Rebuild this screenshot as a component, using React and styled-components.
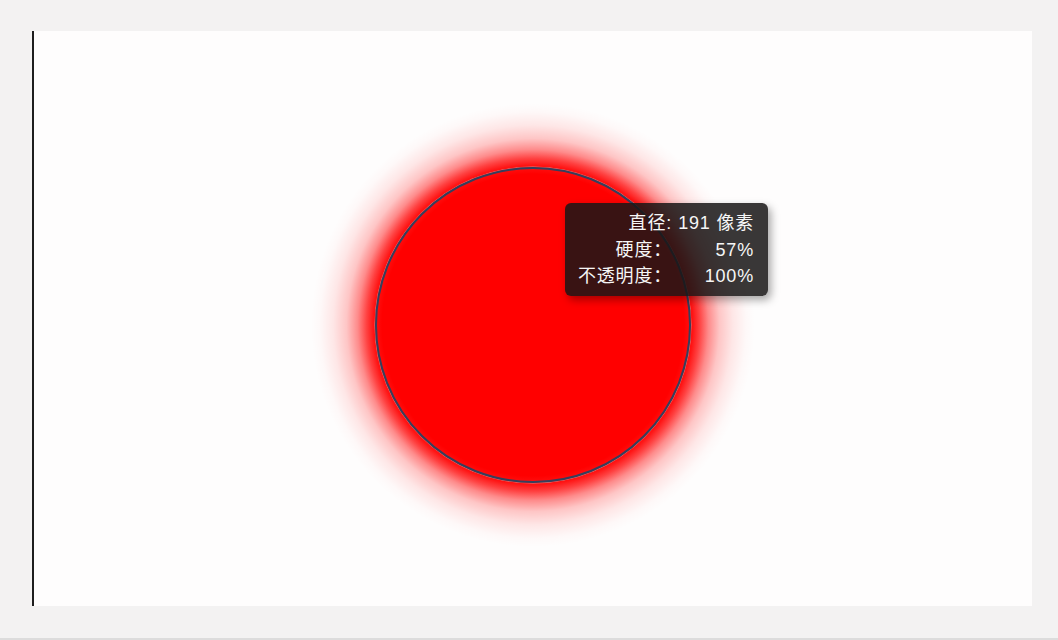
import styled, { createGlobalStyle } from 'styled-components';

const GlobalStyle = createGlobalStyle`
  html, body {
    margin: 0;
    padding: 0;
    background: #f3f2f2;
    font-family: "Noto Sans CJK SC", "Noto Sans", sans-serif;
  }
`;

const Page = styled.div`
  width: 1058px;
  height: 640px;
  box-sizing: border-box;
  padding: 31px 26px 32px 32px;
  border-bottom: 2px solid #dcdcdc;
  background: #f3f2f2;
  display: flex;
`;

const Canvas = styled.div`
  position: relative;
  flex: 1;
  background: #fefdfd;
  border-left: 2px solid #1e1e1e;
  overflow: hidden;
`;

const Brush = styled.div`
  position: absolute;
  left: ${p => p.$x - p.$glow}px;
  top: ${p => p.$y - p.$glow}px;
  width: ${p => p.$glow * 2}px;
  height: ${p => p.$glow * 2}px;
  border-radius: 50%;
  background: radial-gradient(
    circle closest-side,
    #ff0000 0%,
    #ff0000 68%,
    rgba(255, 0, 0, 0.92) 72%,
    rgba(255, 0, 0, 0.74) 75%,
    rgba(255, 0, 0, 0.45) 79%,
    rgba(255, 0, 0, 0.22) 84%,
    rgba(255, 0, 0, 0.09) 90%,
    rgba(255, 0, 0, 0.02) 96%,
    rgba(255, 0, 0, 0) 100%
  );
`;

const Outline = styled.div`
  position: absolute;
  left: ${p => p.$x - p.$r}px;
  top: ${p => p.$y - p.$r}px;
  width: ${p => p.$r * 2}px;
  height: ${p => p.$r * 2}px;
  box-sizing: border-box;
  border-radius: 50%;
  border: 2px solid #34405e;
  box-shadow: 0 0 0 0.5px rgba(190, 190, 190, 0.7);
`;

const Tooltip = styled.div`
  position: absolute;
  left: 531px;
  top: 172px;
  width: 203px;
  height: 93px;
  box-sizing: border-box;
  padding: 7px 14px 0 10px;
  border-radius: 6px;
  background: rgba(24, 22, 22, 0.86);
  box-shadow: 3px 4px 8px rgba(0, 0, 0, 0.35);
  color: #f6f6f6;
  font-family: "Liberation Sans", "Noto Sans CJK SC", sans-serif;
  font-size: 18px;
  line-height: 26.5px;
  letter-spacing: 0.8px;
  display: grid;
  grid-template-columns: 1fr auto;
  align-content: start;
`;

const Label = styled.span`
  text-align: right;
  white-space: pre;
`;

const Value = styled.span`
  text-align: right;
  min-width: 82px;
  white-space: pre;
`;

const rows = [
  ['直径:', '191 像素'],
  ['硬度：', '57%'],
  ['不透明度：', '100%'],
];

export default function App() {
  const cx = 499;
  const cy = 294;
  return (
    <>
      <GlobalStyle />
      <Page>
        <Canvas>
          <Brush $x={cx} $y={cy} $glow={222} />
          <Outline $x={cx} $y={cy} $r={158} />
          <Tooltip>
            {rows.map(([label, value]) => [
              <Label key={label}>{label}</Label>,
              <Value key={value}>{value}</Value>,
            ])}
          </Tooltip>
        </Canvas>
      </Page>
    </>
  );
}
